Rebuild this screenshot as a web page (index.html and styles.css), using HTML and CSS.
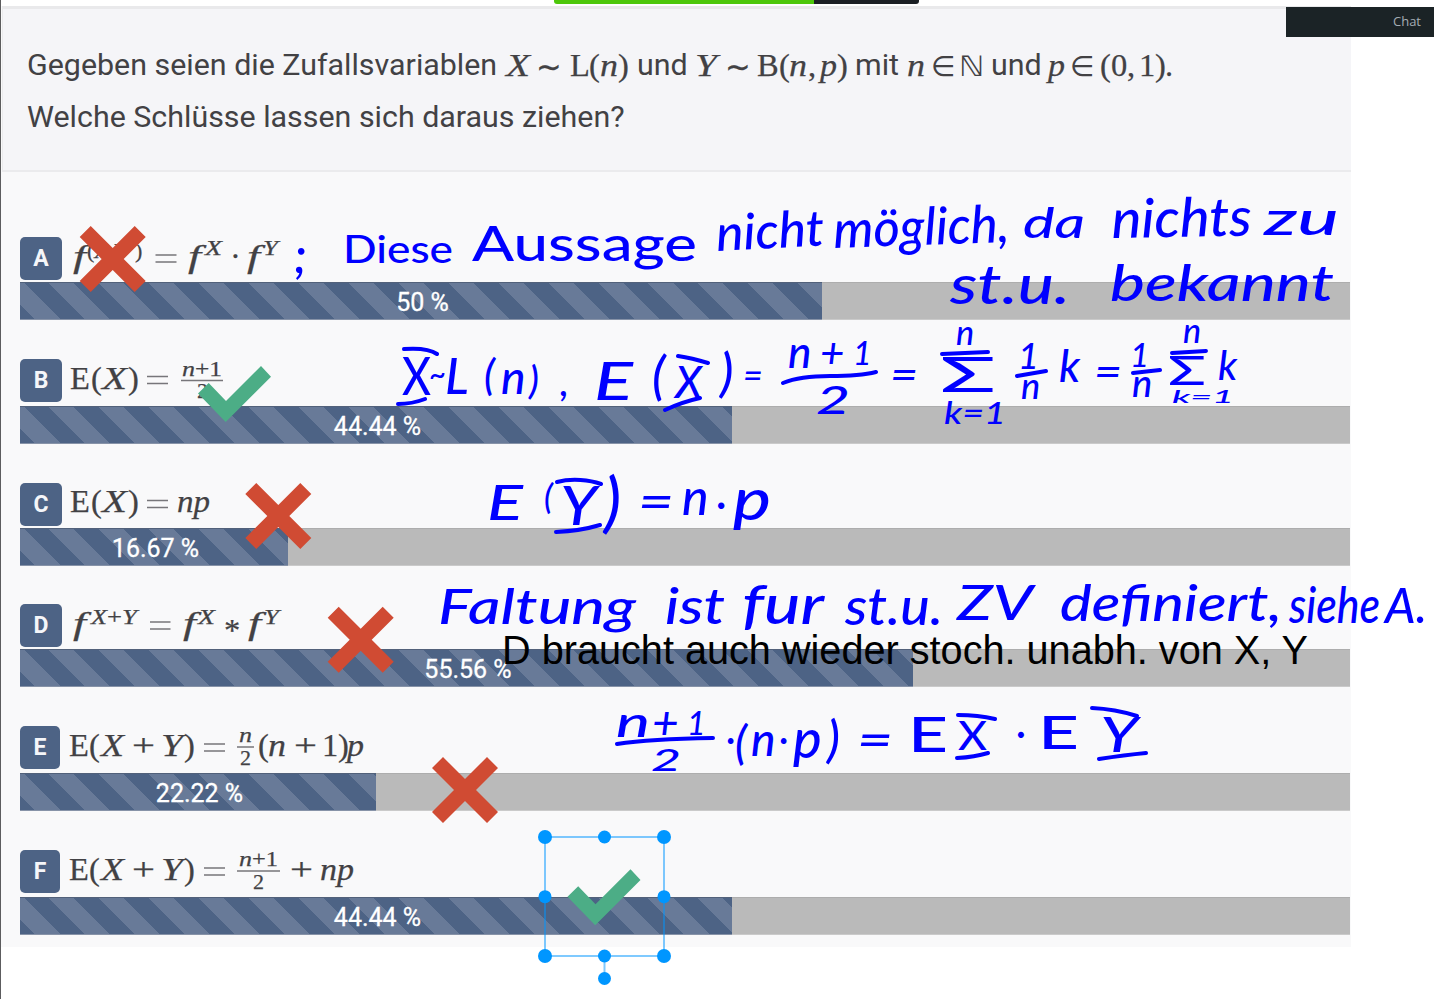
FILE: index.html
```html
<!DOCTYPE html>
<html lang="de">
<head>
<meta charset="utf-8">
<title>Zufallsvariablen</title>
<link rel="stylesheet" href="styles.css">
</head>
<body>
<main class="board">
  <div class="progress"><span class="progress-done"></span><span class="progress-rest"></span></div>
  <section class="slide">
    <header class="question">
      <p class="line">
        <span class="words w1">Gegeben seien die Zufallsvariablen</span>
        <svg class="math" width="132" height="48" viewBox="505 40 132 48">
          <text class="i" x="506" y="75" textLength="24" lengthAdjust="spacingAndGlyphs">X</text>
          <text x="536" y="77" textLength="26" lengthAdjust="spacingAndGlyphs">∼</text>
          <text x="570 589" y="75">L(</text>
          <text class="i" x="600" y="75" textLength="18" lengthAdjust="spacingAndGlyphs">n</text>
          <text x="618" y="75">)</text>
        </svg>
        <span class="words w2">und</span>
        <svg class="math" width="160" height="48" viewBox="695 40 160 48">
          <text class="i" x="695" y="75" textLength="22" lengthAdjust="spacingAndGlyphs">Y</text>
          <text x="725" y="77" textLength="26" lengthAdjust="spacingAndGlyphs">∼</text>
          <text x="757 779" y="75">B(</text>
          <text class="i" x="789" y="75" textLength="18" lengthAdjust="spacingAndGlyphs">n</text>
          <text x="808" y="75">,</text>
          <text class="i" x="820" y="75" textLength="17" lengthAdjust="spacingAndGlyphs">p</text>
          <text x="837" y="75">)</text>
        </svg>
        <span class="words w3">mit</span>
        <svg class="math" width="84" height="48" viewBox="907 40 84 48">
          <text class="i" x="907" y="75" textLength="18" lengthAdjust="spacingAndGlyphs">n</text>
          <text class="sym" x="931" y="75">∈</text>
          <text class="sym" x="959" y="75" font-size="29" textLength="25" lengthAdjust="spacingAndGlyphs">ℕ</text>
        </svg>
        <span class="words w2">und</span>
        <svg class="math" width="130" height="48" viewBox="1049 40 130 48">
          <text class="i" x="1048" y="75" textLength="17" lengthAdjust="spacingAndGlyphs">p</text>
          <text class="sym" x="1070" y="75">∈</text>
          <text x="1100 1111 1127 1139 1155" y="75">(0,1)</text>
          <text x="1165" y="75">.</text>
        </svg>
      </p>
      <p class="line">
        <span class="words">Welche Schlüsse lassen sich daraus ziehen?</span>
      </p>
    </header>

    <article class="option">
      <div class="claim"><b class="badge">A</b>
        <svg class="math" width="300" height="45" viewBox="66 237 300 45">
          <text class="i" x="73" y="267" textLength="13" lengthAdjust="spacingAndGlyphs">f</text>
          <text class="s" x="87" y="258">(<tspan class="i">X</tspan>,<tspan class="i">Y</tspan></text>
          <text class="s" x="135" y="258">)</text>
          <path class="rule" d="M155.500 255h21M155.500 262h21"/>
          <text class="i" x="188" y="267" textLength="13" lengthAdjust="spacingAndGlyphs">f</text>
          <text class="s i" x="205" y="255" textLength="17" lengthAdjust="spacingAndGlyphs">X</text>
          <text x="230" y="267">·</text>
          <text class="i" x="247" y="267" textLength="13" lengthAdjust="spacingAndGlyphs">f</text>
          <text class="s i" x="263" y="255" textLength="15" lengthAdjust="spacingAndGlyphs">Y</text>
        </svg>
      </div>
      <div class="bar"><div class="fill" style="width:802px">50 %</div></div>
    </article>

    <article class="option roomy">
      <div class="claim"><b class="badge">B</b>
        <svg class="math" width="300" height="47" viewBox="66 359 300 47">
          <text x="70 91" y="389">E(</text>
          <text class="i" x="102" y="389" textLength="25" lengthAdjust="spacingAndGlyphs">X</text>
          <text x="128" y="389">)</text>
          <path class="rule" d="M147 376.500h21M147 383.500h21M181 380.500h42"/>
          <text class="s i" x="182" y="376" textLength="13" lengthAdjust="spacingAndGlyphs">n</text>
          <text class="s" x="195" y="376" textLength="27" lengthAdjust="spacingAndGlyphs">+1</text>
          <text class="s" x="197" y="398">2</text>
        </svg>
      </div>
      <div class="bar"><div class="fill" style="width:712px">44.44 %</div></div>
    </article>

    <article class="option">
      <div class="claim"><b class="badge">C</b>
        <svg class="math" width="300" height="45" viewBox="66 483 300 45">
          <text x="70 91" y="512">E(</text>
          <text class="i" x="102" y="512" textLength="25" lengthAdjust="spacingAndGlyphs">X</text>
          <text x="128" y="512">)</text>
          <path class="rule" d="M147 500.500h21M147 507.500h21"/>
          <text class="i" x="177" y="512" textLength="33" lengthAdjust="spacingAndGlyphs">np</text>
        </svg>
      </div>
      <div class="bar"><div class="fill" style="width:268px">16.67 %</div></div>
    </article>

    <article class="option">
      <div class="claim"><b class="badge">D</b>
        <svg class="math" width="300" height="45" viewBox="66 604 300 45">
          <text class="i" x="73" y="634" textLength="13" lengthAdjust="spacingAndGlyphs">f</text>
          <text class="s i" x="91" y="624" textLength="16" lengthAdjust="spacingAndGlyphs">X</text>
          <text class="s" x="107" y="624" textLength="15" lengthAdjust="spacingAndGlyphs">+</text>
          <text class="s i" x="122" y="624" textLength="15" lengthAdjust="spacingAndGlyphs">Y</text>
          <path class="rule" d="M150 622h20.500M150 629h20.500"/>
          <text class="i" x="183" y="634" textLength="13" lengthAdjust="spacingAndGlyphs">f</text>
          <text class="s i" x="198" y="624" textLength="17" lengthAdjust="spacingAndGlyphs">X</text>
          <text x="224" y="641">*</text>
          <text class="i" x="248" y="634" textLength="13" lengthAdjust="spacingAndGlyphs">f</text>
          <text class="s i" x="264" y="624" textLength="15" lengthAdjust="spacingAndGlyphs">Y</text>
        </svg>
      </div>
      <div class="bar"><div class="fill" style="width:893px">55.56 %</div></div>
    </article>

    <article class="option roomy">
      <div class="claim"><b class="badge slim">E</b>
        <svg class="math" width="300" height="47" viewBox="66 726 300 47">
          <text x="69 89" y="756">E(</text>
          <text class="i" x="101" y="756" textLength="23" lengthAdjust="spacingAndGlyphs">X</text>
          <text x="132" y="756" textLength="23" lengthAdjust="spacingAndGlyphs">+</text>
          <text class="i" x="161" y="756" textLength="22" lengthAdjust="spacingAndGlyphs">Y</text>
          <text x="184" y="756">)</text>
          <path class="rule" d="M204 744h21M204 751h21M237 747h17"/>
          <text class="s i" x="239" y="742" textLength="13" lengthAdjust="spacingAndGlyphs">n</text>
          <text class="s" x="240" y="765">2</text>
          <text x="258" y="756">(</text>
          <text class="i" x="268" y="756" textLength="18" lengthAdjust="spacingAndGlyphs">n</text>
          <text x="294" y="756" textLength="23" lengthAdjust="spacingAndGlyphs">+</text>
          <text x="322 338" y="756">1)</text>
          <text class="i" x="347" y="756" textLength="17" lengthAdjust="spacingAndGlyphs">p</text>
        </svg>
      </div>
      <div class="bar"><div class="fill" style="width:356px">22.22 %</div></div>
    </article>

    <article class="option last">
      <div class="claim"><b class="badge slim">F</b>
        <svg class="math" width="300" height="47" viewBox="66 850 300 47">
          <text x="69 89" y="880">E(</text>
          <text class="i" x="101" y="880" textLength="23" lengthAdjust="spacingAndGlyphs">X</text>
          <text x="132" y="880" textLength="23" lengthAdjust="spacingAndGlyphs">+</text>
          <text class="i" x="161" y="880" textLength="22" lengthAdjust="spacingAndGlyphs">Y</text>
          <text x="184" y="880">)</text>
          <path class="rule" d="M204 868h21M204 875h21M237 871h43"/>
          <text class="s i" x="239" y="866" textLength="13" lengthAdjust="spacingAndGlyphs">n</text>
          <text class="s" x="252" y="866" textLength="26" lengthAdjust="spacingAndGlyphs">+1</text>
          <text class="s" x="253" y="889">2</text>
          <text x="290" y="880" textLength="23" lengthAdjust="spacingAndGlyphs">+</text>
          <text class="i" x="320" y="880" textLength="34" lengthAdjust="spacingAndGlyphs">np</text>
        </svg>
      </div>
      <div class="bar"><div class="fill" style="width:712px">44.44 %</div></div>
    </article>
  </section>

  <aside class="chat">Chat</aside>

  <svg class="ink" width="1434" height="999" viewBox="0 0 1434 999">
    <defs>
      <path id="cross" d="M-22-33L0-11L22-33L33-22L11 0L33 22L22 33L0 11L-22 33L-33 22L-11 0L-33-22Z"/>
      <path id="tick" d="M208.700 383L198 393.500L225.700 422L271 376.700L261 366L226 401Z"/>
    </defs>
    <g class="no">
      <use href="#cross" x="112.700" y="259"/>
      <use href="#cross" x="278.300" y="516"/>
      <use href="#cross" x="360.700" y="639.700"/>
      <use href="#cross" x="465" y="790"/>
    </g>
    <g class="yes">
      <use href="#tick"/>
      <use href="#tick" x="369.500" y="503.200"/>
    </g>

    <text class="note" x="502" y="664" textLength="806" lengthAdjust="spacingAndGlyphs">D braucht auch wieder stoch. unabh. von X, Y</text>

    <!-- pen: row A -->
    <g class="pen">
      <text x="294" y="273" font-size="50">;</text>
      <text class="up" x="343" y="263" font-size="38" textLength="110" lengthAdjust="spacingAndGlyphs">Diese</text>
      <text class="up" x="472" y="261" font-size="48" textLength="225" lengthAdjust="spacingAndGlyphs">Aussage</text>
      <text x="717" y="251" font-size="50" textLength="108" lengthAdjust="spacingAndGlyphs" transform="rotate(-3 717 251)">nicht</text>
      <text x="834" y="248" font-size="52" textLength="176" lengthAdjust="spacingAndGlyphs" transform="rotate(-2 834 248)">möglich,</text>
      <text x="1023" y="238" font-size="42" textLength="62" lengthAdjust="spacingAndGlyphs">da</text>
      <text x="1112" y="238" font-size="54" textLength="140" lengthAdjust="spacingAndGlyphs" transform="rotate(-1 1112 238)">nichts</text>
      <text x="1264" y="235" font-size="46" textLength="75" lengthAdjust="spacingAndGlyphs">zu</text>
      <text x="950" y="304" font-size="54" textLength="120" lengthAdjust="spacingAndGlyphs">st.u.</text>
      <text x="1110" y="301" font-size="50" textLength="224" lengthAdjust="spacingAndGlyphs">bekannt</text>
    </g>

    <!-- pen: row B -->
    <g class="pen">
      <text class="up" x="402" y="395" font-size="52" textLength="29" lengthAdjust="spacingAndGlyphs">X</text>
      <text x="429" y="385" font-size="30" textLength="17" lengthAdjust="spacingAndGlyphs">~</text>
      <text x="445" y="394" font-size="50">L</text>
      <text x="484" y="390" font-size="42">(</text>
      <text x="501" y="394" font-size="46">n</text>
      <text x="529" y="394" font-size="38">)</text>
      <text x="560" y="396" font-size="40">,</text>
      <text x="594" y="400" font-size="52" textLength="39" lengthAdjust="spacingAndGlyphs">E</text>
      <text x="652" y="394" font-size="52">(</text>
      <text x="675" y="398" font-size="44">X</text>
      <text x="720" y="391" font-size="52">)</text>
      <text x="743" y="388" font-size="34">=</text>
      <text x="788" y="368" font-size="44">n</text>
      <text x="820" y="368" font-size="42">+</text>
      <text x="853" y="365" font-size="32">1</text>
      <text x="816" y="414" font-size="38" textLength="34" lengthAdjust="spacingAndGlyphs">2</text>
      <text x="890" y="389" font-size="40" textLength="28" lengthAdjust="spacingAndGlyphs">=</text>
      <text x="956" y="345" font-size="34">n</text>
      <text class="up" x="940" y="392" font-size="48" textLength="56" lengthAdjust="spacingAndGlyphs">Σ</text>
      <text x="944" y="424" font-size="30" textLength="62" lengthAdjust="spacingAndGlyphs">k=1</text>
      <text x="1018" y="369" font-size="36">1</text>
      <text x="1021" y="399" font-size="36">n</text>
      <text x="1059" y="382" font-size="44">k</text>
      <text x="1094" y="386" font-size="42" textLength="28" lengthAdjust="spacingAndGlyphs">=</text>
      <text x="1130" y="367" font-size="33">1</text>
      <text x="1132" y="397" font-size="38">n</text>
      <text x="1183" y="343" font-size="34">n</text>
      <text class="up" x="1168" y="385" font-size="40" textLength="38" lengthAdjust="spacingAndGlyphs">Σ</text>
      <text x="1172" y="403" font-size="18" textLength="62" lengthAdjust="spacingAndGlyphs">k=1</text>
      <text x="1218" y="380" font-size="40">k</text>
      <path d="M404 349C418 348 430 349 437 354M398 404Q412 404 425 399M678 356Q692 358 708 363M665 410Q682 402 700 398M783 383Q800 376 830 376T876 372M942 354L988 352M1017 376L1046 371M1133 373L1160 370M1172 353L1206 351"/>
    </g>

    <!-- pen: row C -->
    <g class="pen">
      <text x="487" y="520" font-size="48" textLength="36" lengthAdjust="spacingAndGlyphs">E</text>
      <text x="544" y="509" font-size="34">(</text>
      <text x="560" y="525" font-size="54" textLength="37" lengthAdjust="spacingAndGlyphs">Y</text>
      <text x="604" y="525" font-size="66">)</text>
      <text x="638" y="519" font-size="50" textLength="36" lengthAdjust="spacingAndGlyphs">=</text>
      <text x="682" y="515" font-size="50">n</text>
      <text x="716" y="518" font-size="40">·</text>
      <text x="733" y="520" font-size="58" textLength="38" lengthAdjust="spacingAndGlyphs">p</text>
      <path d="M557 482C572 478 590 480 601 484M556 532Q580 531 600 525"/>
    </g>

    <!-- pen: row D -->
    <g class="pen">
      <text x="438" y="624" font-size="49" textLength="198" lengthAdjust="spacingAndGlyphs">Faltung</text>
      <text x="665" y="624" font-size="50" textLength="60" lengthAdjust="spacingAndGlyphs">ist</text>
      <text x="742" y="624" font-size="54" textLength="82" lengthAdjust="spacingAndGlyphs">fur</text>
      <text x="845" y="625" font-size="52" textLength="98" lengthAdjust="spacingAndGlyphs">st.u.</text>
      <text x="957" y="620" font-size="48" textLength="76" lengthAdjust="spacingAndGlyphs">ZV</text>
      <text x="1060" y="621" font-size="50" textLength="222" lengthAdjust="spacingAndGlyphs">definiert,</text>
      <text x="1289" y="623" font-size="50" textLength="91" lengthAdjust="spacingAndGlyphs">siehe</text>
      <text x="1385" y="623" font-size="48" textLength="42" lengthAdjust="spacingAndGlyphs">A.</text>
    </g>

    <!-- pen: row E -->
    <g class="pen">
      <text x="616" y="737" font-size="42" textLength="34" lengthAdjust="spacingAndGlyphs">n</text>
      <text x="652" y="739" font-size="46">+</text>
      <text x="687" y="735" font-size="32">1</text>
      <text x="651" y="771" font-size="30" textLength="30" lengthAdjust="spacingAndGlyphs">2</text>
      <text x="726" y="752" font-size="36">·</text>
      <text x="735" y="759" font-size="46">(</text>
      <text x="751" y="756" font-size="46">n</text>
      <text x="779" y="752" font-size="36">·</text>
      <text x="793" y="758" font-size="54">p</text>
      <text x="827" y="757" font-size="50">)</text>
      <text x="857" y="757" font-size="48" textLength="36" lengthAdjust="spacingAndGlyphs">=</text>
      <text class="up" x="908" y="752" font-size="48" textLength="40" lengthAdjust="spacingAndGlyphs">E</text>
      <text class="up" x="958" y="750" font-size="40" textLength="29" lengthAdjust="spacingAndGlyphs">X</text>
      <text x="1016" y="746" font-size="38">·</text>
      <text class="up" x="1038" y="749" font-size="46" textLength="41" lengthAdjust="spacingAndGlyphs">E</text>
      <text x="1100" y="752" font-size="48" textLength="38" lengthAdjust="spacingAndGlyphs">Y</text>
      <path d="M617 744Q650 739 713 738M958 715Q978 715 995 719M957 758Q975 757 988 753M1092 708Q1115 709 1137 716M1099 759Q1125 755 1146 753"/>
    </g>

    <!-- selection frame around the last tick -->
    <path class="frame" d="M545 837H664V956H545ZM604.500 956V978"/>
    <g class="handles">
      <circle cx="545" cy="837" r="7"/><circle cx="604.500" cy="837" r="6.500"/><circle cx="664" cy="837" r="7"/>
      <circle cx="545" cy="896.700" r="6.500"/><circle cx="664" cy="896.700" r="6.500"/>
      <circle cx="545" cy="956" r="7"/><circle cx="604.500" cy="956" r="6.500"/><circle cx="664" cy="956" r="7"/>
      <circle cx="604.500" cy="978.500" r="6.500"/>
    </g>
  </svg>
</main>
</body>
</html>
```
FILE: styles.css
```css
* { box-sizing: border-box; }
body { margin: 0; background: #fff; overflow: hidden; }
.board {
  position: relative;
  width: 1434px;
  height: 999px;
  border-left: 1px solid #5c5c5e;
  font-family: Roboto, "Liberation Sans", sans-serif;
}
.progress {
  display: flex;
  width: 365px;
  height: 4px;
  margin-left: 553px;
  overflow: hidden;
  border-radius: 0 0 3px 3px;
}
.progress-done { width: 260px; background: #4dc70a; }
.progress-rest { flex: 1; background: #1b1f24; }
.slide {
  width: 1350px;
  height: 941px;
  margin-top: 2px;
  background: #f9f9fa;
}
.question {
  height: 166px;
  padding: 35px 0 0 24px;
  margin-left: 1px;
  background: #f5f5f8;
  border-top: 3px solid #e9e9eb;
  border-bottom: 2px solid #ebebed;
  border-left: 1px solid #ebebed;
}
.line {
  display: flex;
  align-items: flex-start;
  height: 48px;
  margin: -3px 0 7px;
  line-height: 48px;
  font-size: 30.4px;
  color: #424144;
}
.words { flex: none; white-space: nowrap; }
.w1 { width: 478px; }
.w2 { width: 58px; }
.w3 { width: 52px; }
.math {
  flex: none;
  overflow: visible;
  font-family: "Liberation Serif", serif;
  font-size: 32.5px;
  fill: #424144;
}
.math text { stroke: #424144; stroke-width: .25; }
.math .i { font-style: italic; }
.math .s { font-size: 22px; }
.math .sym { font-family: "DejaVu Sans", sans-serif; font-size: 28px; stroke: none; }
.rule { stroke: #77767a; stroke-width: 1.5; fill: none; }
.option { margin-left: 19px; height: 122px; }
.option:nth-of-type(1) { margin-top: 65px; }
.option.roomy { height: 124px; }
.option:nth-of-type(3) { height: 121px; }
.claim { display: flex; height: 45px; }
.roomy .claim, .last .claim { height: 47px; }
.badge {
  flex: none;
  width: 42px;
  height: 43px;
  margin-right: 4px;
  border-radius: 5px;
  background: #4d6385;
  color: #f5f6f9;
  font-size: 23px;
  line-height: 43px;
  text-align: center;
}
.badge.slim { width: 40px; margin-right: 6px; }
.bar {
  width: 1330px;
  height: 38px;
  background: #bababa;
  border-top: 1px solid #adadad;
  border-bottom: 1px solid #cacaca;
}
.fill {
  height: 38px;
  margin-top: -1px;
  border-top: 1px solid #52617a;
  border-bottom: 1px solid #8793a8;
  background: repeating-linear-gradient(45deg, #4d6385 0 10.6px, #687a98 10.6px 28.3px, #4d6385 28.3px 35.3px);
  color: #fff;
  font-size: 25px;
  line-height: 40px;
  text-align: center;
  padding-left: 3px;
  -webkit-text-stroke: .3px #fff;
}
.chat {
  position: absolute;
  top: 7px;
  left: 1285px;
  width: 148px;
  height: 30px;
  padding-right: 13px;
  background: #1b2326;
  color: #a5adb4;
  font: 13px/28px "Open Sans", sans-serif;
  text-align: right;
}
.ink { position: absolute; top: 0; left: -1px; }
.no { fill: #d04b33; }
.yes { fill: #4cad86; }
.note { font: 40px "Liberation Sans", sans-serif; fill: #000; }
.pen {
  font-family: Lato, "Open Sans", sans-serif;
  font-style: italic;
  font-weight: 500;
  fill: #00f;
}
.pen .up { font-style: normal; }
.pen path {
  fill: none;
  stroke: #00f;
  stroke-width: 4;
  stroke-linecap: round;
  stroke-linejoin: round;
}
.frame { fill: none; stroke: #0096ff; stroke-opacity: .5; stroke-width: 2; }
.handles { fill: #0096ff; }
```
